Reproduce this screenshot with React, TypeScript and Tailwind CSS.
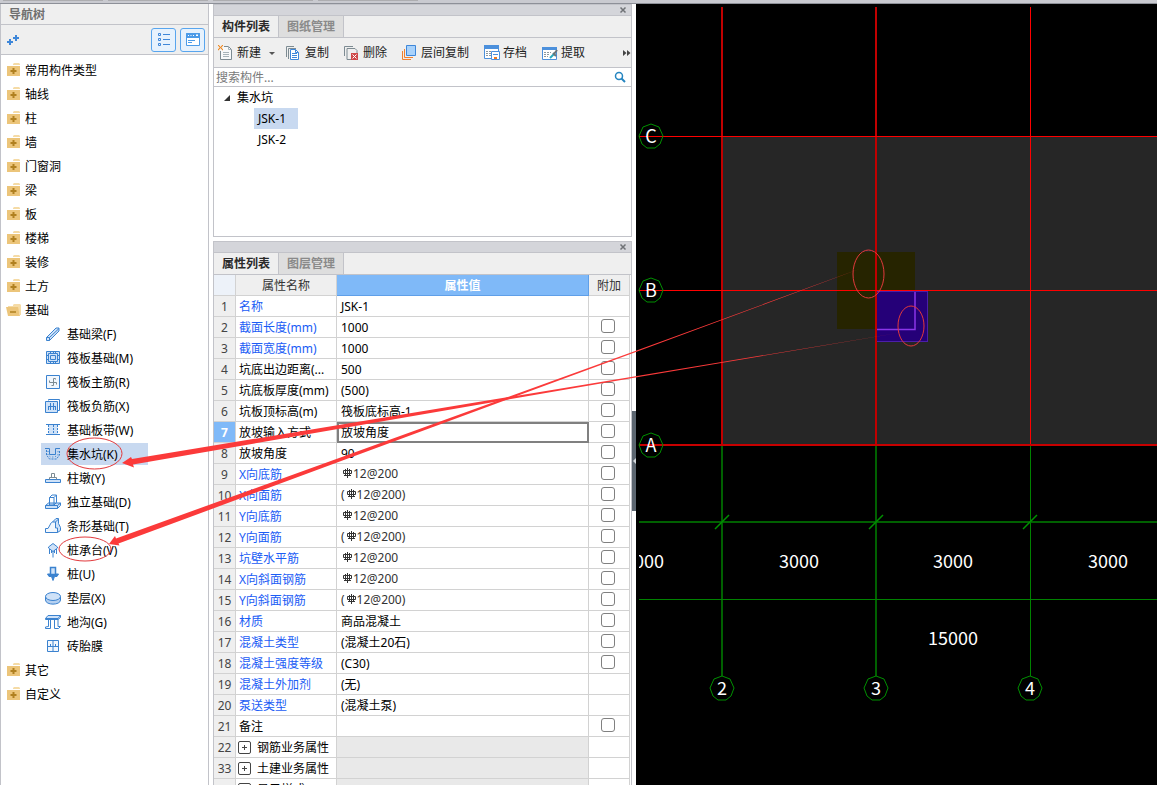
import React, { useState } from 'react'

interface Item {
  label: string
  icon: React.ReactNode
}

interface Property {
  no: number
  name: string
  value?: string
  rebar?: boolean
  blue?: boolean
  check?: boolean
  group?: boolean
}

const BLUE = '#3b82cf'
const PALE = '#cfe2f8'

function Icon({ children }: { children: React.ReactNode }) {
  return (
    <svg
      aria-hidden="true"
      className="h-4 w-4 shrink-0"
      viewBox="0 0 16 16"
      fill="none"
      stroke={BLUE}
      strokeWidth={1}
    >
      {children}
    </svg>
  )
}

function Folder({ open = false }: { open?: boolean }) {
  if (open) {
    return (
      <svg aria-hidden="true" className="h-4 w-4 shrink-0" viewBox="0 0 16 16">
        <path d="M8 4V3l1-1h6l1 1v10h-1L12 5H3V4z" fill="#f5dba6" />
        <path d="M1 5h12l2 9H3z" fill="#ecc57a" />
        <path d="M5 10h6" stroke="#b08020" strokeWidth={1.500} />
      </svg>
    )
  }
  return (
    <svg aria-hidden="true" className="h-4 w-4 shrink-0" viewBox="0 0 16 16">
      <path d="M8 3V2l1-1h5l1 1v1z" fill="#f5dba6" />
      <path d="M2 4h13v10H2z" fill="#ecc57a" />
      <path d="M8.500 6v6M5.500 9h6" stroke="#b08020" strokeWidth={2} />
    </svg>
  )
}

const topItems = [
  '常用构件类型',
  '轴线',
  '柱',
  '墙',
  '门窗洞',
  '梁',
  '板',
  '楼梯',
  '装修',
  '土方',
]

const baseItems: Item[] = [
  {
    label: '基础梁(F)',
    icon: (
      <Icon>
        <path d="M1.500 11.500 11 2h3v3L4.500 14.500h-3z" fill={PALE} />
        <path d="M1.500 11.500h3v3M4.500 11.500 14 2.500" />
      </Icon>
    ),
  },
  {
    label: '筏板基础(M)',
    icon: (
      <Icon>
        <path d="M1.500 1.500h13v12h-13z" fill={PALE} />
        <path d="M5.500 5.500h5v4h-5zM1.500 5.500h2M1.500 9.500h2M12.500 5.500h2M12.500 9.500h2M5.500 1.500v2M8.500 1.500v2M10.500 1.500v2M5.500 11.500v2M8.500 11.500v2M10.500 11.500v2M3.500 3.500h9v8h-9z" />
      </Icon>
    ),
  },
  {
    label: '筏板主筋(R)',
    icon: (
      <Icon>
        <path d="M1.500 1.500h13v13h-13z" fill="#f2f7fd" />
        <path d="M10.500 5.500V4.500h-2v7h-2M4.500 6.500v2h7v2" stroke="#7d8b92" />
      </Icon>
    ),
  },
  {
    label: '筏板负筋(X)',
    icon: (
      <Icon>
        <path d="M3.500 2.500v-1h11v11h-2" />
        <path d="M.5 3.500h12v11H.5z" fill={PALE} />
        <path d="M5.500 5v7M8.500 5v7M3 8.500h8M3.500 8v4M10.500 8v4" />
      </Icon>
    ),
  },
  {
    label: '基础板带(W)',
    icon: (
      <Icon>
        <path d="M3.500 2.500h9v10h-9z" fill={PALE} stroke="none" />
        <path d="M1 2.500h14M1 12.500h14" />
        <path d="M3.500 3v10M8.500 3v10M12.500 3v10" strokeDasharray="2 1" />
      </Icon>
    ),
  },
  {
    label: '集水坑(K)',
    icon: (
      <Icon>
        <path d="M0 2.500h4.500v6h6v-6H15" />
        <path d="M1.500 4v5l3 4h7l3-4V4" strokeDasharray="2 1" />
        <path d="M3 5v4l2.500 2h4L13 9V5" strokeDasharray="1 2" />
      </Icon>
    ),
  },
  {
    label: '柱墩(Y)',
    icon: (
      <Icon>
        <path d="M.5 9.500h15v3H.5z" fill={PALE} />
        <path d="M4.500 9.500v-2h7v2M6.500 7V3.500h3V7" stroke="#7d8b92" />
      </Icon>
    ),
  },
  {
    label: '独立基础(D)',
    icon: (
      <Icon>
        <path d="M.5 11.500 3.500 9h12v2.500l-3 3H.5z" fill={PALE} />
        <path d="M4.500 11V3.500L7 1h4.500v7.500L9 11zM4.500 3.500H9V11M9 3.500 11.500 1M.5 11.500h12v3M12.500 11.500l3-2.500" />
      </Icon>
    ),
  },
  {
    label: '条形基础(T)',
    icon: (
      <Icon>
        <path d="M7.500 4 11 .5h2.500v5l2 4v3l-3 2z" fill={PALE} />
        <path d="M.5 14.500v-4H3L5.500 6v-.5l2-1.500h3v6h2v4.500zM10.500 4l3-3" fill="#f2f7fd" />
      </Icon>
    ),
  },
  {
    label: '桩承台(V)',
    icon: (
      <Icon>
        <path d="M3.500 5 8 1.500 12.500 5v1L8 9.500 3.500 6z" fill={PALE} />
        <path d="M8 9v6.500M4.500 7v5M11.500 7v5M6.500 8v3M9.500 8v3" />
      </Icon>
    ),
  },
  {
    label: '桩(U)',
    icon: (
      <Icon>
        <path d="M5.500 1.500h5v7h-5z" fill={PALE} strokeWidth={1.500} />
        <path d="M2.500 8h3v1h5V8h3L12 10.500H9.500L8 14.500 6.500 10.500H4z" fill={BLUE} />
      </Icon>
    ),
  },
  {
    label: '垫层(X)',
    icon: (
      <Icon>
        <path d="M.5 6.500v3.500c0 5.500 15 5.500 15 0V6.500" fill="#b5d0f0" />
        <ellipse cx="8" cy="6.500" rx="7.500" ry="4" fill={PALE} />
      </Icon>
    ),
  },
  {
    label: '地沟(G)',
    icon: (
      <Icon>
        <path d="M.5 4.500 3 1.500h12.500L13 4.500zM.5 4.500v1H13v-1" fill={PALE} />
        <path d="M3.500 5.500v7L.5 13v1.500h5v-9M9.500 5.500v9h4l2-2H13v-7l2.500-2v-2" />
      </Icon>
    ),
  },
  {
    label: '砖胎膜',
    icon: (
      <Icon>
        <path d="M2.500 2.500h11v11h-11zM8 2.500v11M2.500 8.500h11M5.500 6v2.500M10.500 6v2.500" fill="#f2f7fd" />
      </Icon>
    ),
  },
]

const properties: Property[] = [
  { no: 1, name: '名称', value: 'JSK-1', blue: true },
  { no: 2, name: '截面长度(mm)', value: '1000', blue: true, check: true },
  { no: 3, name: '截面宽度(mm)', value: '1000', blue: true, check: true },
  { no: 4, name: '坑底出边距离(...', value: '500', check: true },
  { no: 5, name: '坑底板厚度(mm)', value: '(500)', check: true },
  { no: 6, name: '坑板顶标高(m)', value: '筏板底标高-1', check: true },
  { no: 7, name: '放坡输入方式', value: '放坡角度', check: true },
  { no: 8, name: '放坡角度', value: '90', check: true },
  { no: 9, name: 'X向底筋', value: '12@200', rebar: true, blue: true, check: true },
  { no: 10, name: 'X向面筋', value: '(12@200)', rebar: true, blue: true, check: true },
  { no: 11, name: 'Y向底筋', value: '12@200', rebar: true, blue: true, check: true },
  { no: 12, name: 'Y向面筋', value: '(12@200)', rebar: true, blue: true, check: true },
  { no: 13, name: '坑壁水平筋', value: '12@200', rebar: true, blue: true, check: true },
  { no: 14, name: 'X向斜面钢筋', value: '12@200', rebar: true, blue: true, check: true },
  { no: 15, name: 'Y向斜面钢筋', value: '(12@200)', rebar: true, blue: true, check: true },
  { no: 16, name: '材质', value: '商品混凝土', blue: true, check: true },
  { no: 17, name: '混凝土类型', value: '(混凝土20石)', blue: true, check: true },
  { no: 18, name: '混凝土强度等级', value: '(C30)', blue: true, check: true },
  { no: 19, name: '混凝土外加剂', value: '(无)', blue: true },
  { no: 20, name: '泵送类型', value: '(混凝土泵)', blue: true },
  { no: 21, name: '备注', value: '', check: true },
  { no: 22, name: '钢筋业务属性', group: true },
  { no: 33, name: '土建业务属性', group: true },
  { no: 38, name: '显示样式', group: true },
]

function NavFolder({ label, open }: { label: string; open?: boolean }) {
  return (
    <button className="flex h-6 items-center gap-1 pl-1">
      <Folder open={open} />
      <span className="pt-[2px]">{label}</span>
    </button>
  )
}

function NavTree() {
  const [selected, setSelected] = useState('集水坑(K)')

  return (
    <nav className="flex w-[209px] shrink-0 flex-col border-x border-[#c2c3c9] bg-white">
      <h2 className="h-[21px] border-b border-[#c2c3c9] bg-[#efefef] pt-[2px] pl-2 font-bold leading-[18px] text-[#6f6f6f]">
        导航树
      </h2>
      <div className="flex h-[30px] items-center gap-1 border-b border-[#c2c3c9] bg-[#efefef] pr-[3px] pl-1">
        <button aria-label="添加" className="mr-auto">
          <svg className="h-4 w-4" viewBox="0 0 16 16" stroke="#3f87d9" strokeWidth={2}>
            <path d="M2 10h6M5 7v6M8 6h6M11 3v6" />
          </svg>
        </button>
        <button
          aria-label="列表"
          className="flex h-6 w-[25px] items-center justify-center rounded-[3px] border border-[#58a5ee] bg-[#e7f2fd]"
        >
          <svg className="h-4 w-4" viewBox="0 0 16 16" fill="none" stroke="#3f87d9">
            <path d="M2.500 1.500h2v2h-2zM2.500 6.500h2v2h-2zM2.500 11.500h2v2h-2zM7 2.500h7M7 7.500h7M7 12.500h7" />
          </svg>
        </button>
        <button
          aria-label="窗口"
          className="flex h-6 w-[25px] items-center justify-center rounded-[3px] border border-[#58a5ee] bg-[#e7f2fd]"
        >
          <svg className="h-4 w-4" viewBox="0 0 16 16" fill="none" stroke="#4c9be8">
            <path d="M1.500 1.500h13v12h-13z" fill="#fff" />
            <path d="M1.500 1.500h13v4h-13z" fill="#4c9be8" />
            <path d="M3 8.500h7M3 10.500h4" />
            <path d="M3 3.500h1M5.500 3.500h1M8 3.500h1M11 3h2l-1 1z" stroke="#fff" />
          </svg>
        </button>
      </div>
      <ul className="pt-[3px]">
        {topItems.map((label) => (
          <li key={label}>
            <NavFolder label={label} />
          </li>
        ))}
        <li>
          <NavFolder label="基础" open />
          <ul>
            {baseItems.map((item) => (
              <li key={item.label} className="flex h-6 items-center pl-10">
                <button
                  onClick={() => setSelected(item.label)}
                  className={
                    item.label === selected
                      ? 'flex h-[22px] w-[107px] items-center gap-[6px] bg-[#c8d9f0] pl-1'
                      : 'flex h-[22px] w-[107px] items-center gap-[6px] pl-1'
                  }
                >
                  {item.icon}
                  <span className="pt-[2px]">{item.label}</span>
                </button>
              </li>
            ))}
          </ul>
        </li>
        <li>
          <NavFolder label="其它" />
        </li>
        <li>
          <NavFolder label="自定义" />
        </li>
      </ul>
    </nav>
  )
}

function TitleBar() {
  return (
    <div className="flex h-[11px] shrink-0 items-center justify-end border-b border-[#c2c3c9] bg-[#d4d5da] pr-1">
      <button aria-label="关闭">
        <svg className="h-2 w-2" viewBox="0 0 8 8" stroke="#6f7276" strokeWidth={1.500}>
          <path d="M1.500 1.500l5 5M6.500 1.500l-5 5" />
        </svg>
      </button>
    </div>
  )
}

function Tabs({ active, other }: { active: string; other: string }) {
  return (
    <div className="flex h-[22px] shrink-0 border-b border-[#c2c3c9] bg-[#efefef] font-bold">
      <button className="w-[65px] border-r border-[#c2c3c9] text-[#2a2a2a]">{active}</button>
      <button className="w-[65px] border-r border-[#c2c3c9] bg-[#dedede] text-[#8a8a8a]">
        {other}
      </button>
    </div>
  )
}

function ToolButton({ label, children }: { label: string; children: React.ReactNode }) {
  return (
    <button className="flex shrink-0 items-center gap-[3px] text-[#222]">
      <svg aria-hidden="true" className="h-4 w-4" viewBox="0 0 16 16" fill="none">
        {children}
      </svg>
      {label}
    </button>
  )
}

function ComponentList() {
  const [search, setSearch] = useState('')

  return (
    <section className="flex h-[233px] shrink-0 flex-col border border-[#c2c3c9] bg-white">
      <TitleBar />
      <Tabs active="构件列表" other="图纸管理" />
      <div className="flex h-[30px] shrink-0 items-center gap-[15px] border-b border-[#c2c3c9] bg-[#efefef] pl-1">
        <div className="-mr-1 flex items-center gap-1">
          <ToolButton label="新建">
            <path d="M2.500 6v8.500h11v-10l-3-3H6" fill="#f7f9fa" stroke="#7d8b92" />
            <path d="M10.500 1.500v3h3M5 7.500h6M5 9.500h6M5 11.500h6" stroke="#a7b3b9" />
            <path
              d="M0 .5h1M4 .5h1M1 1.500h1M3 1.500h1M2 2.500h1M1 3.500h1M3 3.500h1M0 4.500h1M4 4.500h1"
              stroke="#f08a24"
              strokeWidth={1.500}
            />
          </ToolButton>
          <button aria-label="新建选项">
            <svg className="h-[10px] w-[10px]" viewBox="0 0 10 10" fill="#555">
              <path d="M4 4h6L7 7z" />
            </svg>
          </button>
        </div>
        <ToolButton label="复制">
          <path d="M.5 12V1.500H8M2.500 14V3.500H10" stroke="#7d8b92" />
          <path d="M4.500 4.500h5l3 3v7h-8z" fill="#fff" stroke="#3f87d9" />
          <path d="M6 8.500h5M6 10.500h5M6 12.500h5M9.500 4.500v3h3" stroke="#3f87d9" />
        </ToolButton>
        <ToolButton label="删除">
          <path d="M.5 11V1.500H9M3 14.500V3.500h8l2 2V8M3 14.500h4" stroke="#7d8b92" />
          <path d="M7 8h7v7H7z" fill="#cf4a4a" />
          <path d="M8.500 9.500l4 4M12.500 9.500l-4 4" stroke="#fff" />
        </ToolButton>
        <ToolButton label="层间复制">
          <path d="M.5 6v8.500H9M2.500 4v8.500H11" stroke="#f08030" />
          <path d="M4.500.5h9v10h-9z" fill="#a9d2fb" stroke="#3f87d9" />
        </ToolButton>
        <ToolButton label="存档">
          <path d="M.5 1.500h14v12H.5z" fill="#fff" stroke="#4c90dc" />
          <path d="M0 0h15v4H0z" fill="#4c90dc" />
          <path d="M2 6.500h9M2 8.500h5M2 10.500h5" stroke="#8b979d" strokeDasharray="2 1" />
          <path d="M7.500 6.500h8v8h-8z" fill="#fff" stroke="#4c90dc" />
          <path d="M10 12h3v2h-3z" fill="#f07820" />
          <path d="M9 9.500h5" stroke="#4c90dc" />
        </ToolButton>
        <ToolButton label="提取">
          <path d="M.5 3.500h14v11H.5z" fill="#fff" stroke="#4c90dc" />
          <path d="M0 2h15v3H0z" fill="#4c90dc" />
          <path d="M2 7.500h7M2 9.500h6M2 11.500h4" stroke="#8b979d" strokeDasharray="2 1" />
          <path d="M8 13l5-5" stroke="#27aabf" strokeWidth={2} />
          <path d="M11 8l3 3M12 9l3-4" stroke="#6b7479" strokeWidth={2} />
        </ToolButton>
        <button aria-label="更多" className="ml-auto">
          <svg className="h-2 w-2" viewBox="0 0 8 8" fill="#444">
            <path d="M0 1l3.500 3L0 7zM4 1l3.500 3L4 7z" />
          </svg>
        </button>
      </div>
      <div className="flex h-[19px] shrink-0 items-center border-b border-[#c2c3c9] pr-[5px] pl-[2px]">
        <input
          type="search"
          aria-label="搜索构件"
          placeholder="搜索构件..."
          value={search}
          onChange={(e) => setSearch(e.target.value)}
          className="h-[18px] min-w-0 flex-1 outline-none placeholder:text-[#7a7a7a]"
        />
        <svg aria-hidden="true" className="h-3 w-3" viewBox="0 0 12 12" fill="none" stroke="#2585c0">
          <circle cx="5" cy="5" r="3.500" strokeWidth={1.500} />
          <path d="M7.500 7.500l3.500 3.500" strokeWidth={2} />
        </svg>
      </div>
      <ul className="leading-[21px]">
        <li>
          <button className="flex h-[21px] items-center gap-[6px] pl-[9px]">
            <svg aria-hidden="true" className="h-2 w-2" viewBox="0 0 8 8" fill="#333">
              <path d="M7 1v6H1z" />
            </svg>
            集水坑
          </button>
          <ul className="pl-10">
            <li>
              <button className="block h-[21px] w-11 bg-[#c8d9f0] pl-1 text-left">JSK-1</button>
            </li>
            <li>
              <button className="block h-[21px] w-11 pl-1 text-left">JSK-2</button>
            </li>
          </ul>
        </li>
      </ul>
    </section>
  )
}

function Rebar() {
  return (
    <svg
      aria-label="三级钢"
      className="mb-[2px] h-[10px] w-3"
      viewBox="0 0 12 10"
      fill="none"
      stroke="#333"
    >
      <path d="M6.500 0v10M2.500 2.500h8v3h-8zM4.500 1v6M8.500 1v6M3 7.500h7" />
    </svg>
  )
}

function PropertyValue({ item }: { item: Property }) {
  if (!item.rebar) {
    return <>{item.value}</>
  }
  const bracket = item.value?.startsWith('(')
  return (
    <span className="flex h-[18px] items-center text-[#333]">
      {bracket && <span>(</span>}
      <Rebar />
      <span>{bracket ? item.value?.slice(1) : item.value}</span>
    </span>
  )
}

function valueClass(item: Property, active: boolean) {
  if (item.group) {
    return 'border-r border-b border-[#d2d2d2] bg-[#e9e9e9] p-0'
  }
  if (active) {
    return 'border-r border-b border-[#d2d2d2] p-0 pt-[2px] pl-1 outline-2 -outline-offset-2 outline-[#808080]'
  }
  if (item.rebar) {
    return 'border-r border-b border-[#d2d2d2] p-0 pl-1'
  }
  return 'border-r border-b border-[#d2d2d2] p-0 pt-[2px] pl-1'
}

function PropertyTable() {
  const [active, setActive] = useState(7)

  return (
    <section className="flex min-h-0 flex-1 flex-col border border-b-0 border-[#c2c3c9] bg-white">
      <TitleBar />
      <Tabs active="属性列表" other="图层管理" />
      <div className="min-h-0 flex-1 overflow-hidden pr-px">
        <table className="w-full table-fixed border-separate border-spacing-0 leading-[18px]">
          <colgroup>
            <col className="w-[22px]" />
            <col className="w-[101px]" />
            <col />
            <col className="w-[41px]" />
          </colgroup>
          <thead>
            <tr className="text-[#333]">
              <th className="h-[21px] border-r border-b border-[#d2d2d2] bg-[#edf2f9] p-0"></th>
              <th className="border-r border-b border-[#d2d2d2] bg-[#efefef] p-0 pt-px font-normal">
                属性名称
              </th>
              <th className="border-r border-b border-[#5f9fe8] bg-[#7fb9f8] p-0 pt-px text-white">
                属性值
              </th>
              <th className="border-r border-b border-[#d2d2d2] bg-[#efefef] p-0 pt-px font-normal">
                附加
              </th>
            </tr>
          </thead>
          <tbody>
            {properties.map((item) => (
              <tr key={item.no} onClick={() => setActive(item.no)}>
                <td
                  className={
                    item.no === active
                      ? 'h-[21px] border-r border-b border-[#d2d2d2] bg-[#7fb9f8] p-0 pt-[2px] text-center font-bold text-white'
                      : 'h-[21px] border-r border-b border-[#d2d2d2] bg-[#efefef] p-0 pt-[2px] text-center text-[#444]'
                  }
                >
                  {item.no}
                </td>
                <td
                  className={
                    item.blue
                      ? 'border-r border-b border-[#d2d2d2] p-0 pt-[2px] pl-[3px] whitespace-nowrap text-[#1a5cf5]'
                      : 'border-r border-b border-[#d2d2d2] p-0 pt-[2px] pl-[3px] whitespace-nowrap'
                  }
                >
                  {item.group ? (
                    <button className="flex items-center gap-[6px]">
                      <svg
                        aria-hidden="true"
                        className="-ml-px mb-[2px] h-[13px] w-[13px]"
                        viewBox="0 0 13 13"
                        fill="none"
                        stroke="#444"
                      >
                        <rect x="0.500" y="0.500" width="12" height="12" rx="1.500" />
                        <path d="M4 6.500h5M6.500 4v5" />
                      </svg>
                      {item.name}
                    </button>
                  ) : (
                    item.name
                  )}
                </td>
                <td className={valueClass(item, item.no === active)}>
                  <PropertyValue item={item} />
                </td>
                <td className="border-r border-b border-[#d2d2d2] p-0">
                  {item.check && (
                    <input
                      type="checkbox"
                      aria-label={item.name}
                      className="mt-px mb-1 ml-3 block h-[14px] w-[14px] appearance-none rounded-[3px] border border-[#808080] bg-white checked:bg-[#7fb9f8]"
                    />
                  )}
                </td>
              </tr>
            ))}
          </tbody>
        </table>
      </div>
    </section>
  )
}

function Bubble({ x, y, label }: { x: number; y: number; label: string }) {
  return (
    <g transform={`translate(${x} ${y})`}>
      <path
        d="M0-12 8-9 12 0 9 8 4 12-4 12-9 8-12 0-8-9z"
        fill="none"
        stroke="#009000"
      />
      <text y="7" textAnchor="middle" fill="#fff">
        {label}
      </text>
    </g>
  )
}

const columns = [
  { x: 86, width: 2, red: '#c00000', green: '#006000' },
  { x: 240, width: 2, red: '#c00000', green: '#006000' },
  { x: 394.5, width: 1, red: '#ff0000', green: '#008200' },
]

const rows = [
  { y: 132.5, width: 1, red: '#ff0000' },
  { y: 286.5, width: 1, red: '#ff0000' },
  { y: 441, width: 2, red: '#c80000' },
]

function Drawing() {
  return (
    <main className="min-w-0 flex-1 bg-black">
      <svg className="block h-full w-full font-['Noto_Sans_CJK_SC',sans-serif] text-[18px]">
        <rect x="86" y="133" width="100%" height="308" fill="#262626" />
        <rect x="201" y="248" width="78" height="77" fill="#262400" />
        <rect x="240.500" y="287.500" width="51" height="50" fill="#250078" stroke="#4b1fa8" />
        <path d="M279 288v37.500h-38" fill="none" stroke="#8a35e8" strokeWidth="1.500" />
        {columns.map((c) => (
          <g key={c.x} strokeWidth={c.width}>
            <line x1={c.x} x2={c.x} y1="3" y2="441" stroke={c.red} />
            <line x1={c.x} x2={c.x} y1="442" y2="672" stroke={c.green} />
          </g>
        ))}
        {rows.map((r) => (
          <line key={r.y} x1="3" x2="100%" y1={r.y} y2={r.y} stroke={r.red} strokeWidth={r.width} />
        ))}
        <line x1="3" x2="100%" y1="518" y2="518" stroke="#006000" strokeWidth="2" />
        <line x1="3" x2="100%" y1="595.500" y2="595.500" stroke="#008200" />
        <path d="M79 525l14-14M233 525l14-14M387 525l14-14" stroke="#009000" strokeWidth="1.500" />
        <Bubble x={15} y={132} label="C" />
        <Bubble x={15} y={286} label="B" />
        <Bubble x={15} y={441} label="A" />
        <Bubble x={86} y={684} label="2" />
        <Bubble x={240} y={684} label="3" />
        <Bubble x={394} y={684} label="4" />
        <svg x="3" y="540" width="60" height="40">
          <text x="-15" y="24" fill="#fff">
            3000
          </text>
        </svg>
        <g fill="#fff" textAnchor="middle">
          <text x="163" y="564">
            3000
          </text>
          <text x="317" y="564">
            3000
          </text>
          <text x="472" y="564">
            3000
          </text>
          <text x="317" y="641">
            15000
          </text>
        </g>
      </svg>
    </main>
  )
}

// red marks drawn over the whole window
function Annotations() {
  return (
    <svg aria-hidden="true" className="pointer-events-none absolute inset-0 h-full w-full">
      <g fill="none" stroke="#e2393c">
        <ellipse cx="94.500" cy="453.500" rx="27.500" ry="15.500" />
        <ellipse cx="85" cy="549" rx="26" ry="12" />
        <ellipse cx="868.500" cy="274" rx="15.500" ry="24" />
        <ellipse cx="911" cy="326" rx="13" ry="20" />
      </g>
      <g fill="#fb3a3a">
        <path d="M898 333 640 375.500 132 459 131 457 122 463 134 467.500 133 464.500 640 376.700z" />
        <path d="M862 268 640 349.300 116 538.500 115 536 109 544 119.500 545.500 118.500 543.500 640 350.500z" />
      </g>
    </svg>
  )
}

export default function App() {
  return (
    <div className="relative flex h-screen flex-col overflow-hidden bg-white font-['Noto_Sans','Noto_Sans_CJK_SC',sans-serif] text-[12px] leading-4 text-black">
      <div className="flex h-1 shrink-0 gap-[5px] border-b border-[#8d9098] bg-[#c9cad0] pl-[3px]">
        <div className="h-px w-[100px] bg-[#adadb0]" />
        <div className="h-px w-[100px] bg-[#adadb0]" />
        <div className="h-px w-[100px] bg-[#adadb0]" />
        <div className="h-px w-[100px] bg-[#adadb0]" />
      </div>
      <div className="flex min-h-0 flex-1">
        <NavTree />
        <div className="ml-1 flex w-[419px] shrink-0 flex-col gap-1">
          <ComponentList />
          <PropertyTable />
        </div>
        <div className="flex w-1 shrink-0 flex-col pt-[407px]">
          <button aria-label="收起" className="h-[100px] w-1 bg-[#5c6670]">
            <svg className="h-[6px] w-1" viewBox="0 0 4 6" fill="#d4d8dc">
              <path d="M4 0v6L1 3z" />
            </svg>
          </button>
        </div>
        <Drawing />
      </div>
      <Annotations />
    </div>
  )
}
